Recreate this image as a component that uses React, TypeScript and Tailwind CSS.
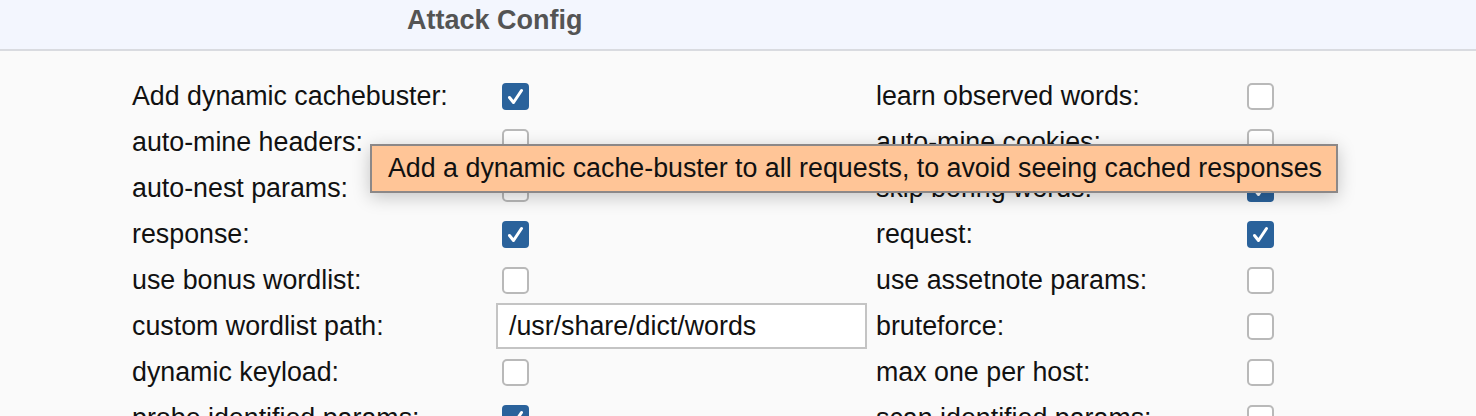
import React from 'react';

type Field = { label: string; checked?: boolean; text?: string };

const ROWS: [Field, Field][] = [
  [{ label: 'Add dynamic cachebuster:', checked: true }, { label: 'learn observed words:', checked: false }],
  [{ label: 'auto-mine headers:', checked: false }, { label: 'auto-mine cookies:', checked: false }],
  [{ label: 'auto-nest params:', checked: false }, { label: 'skip boring words:', checked: true }],
  [{ label: 'response:', checked: true }, { label: 'request:', checked: true }],
  [{ label: 'use bonus wordlist:', checked: false }, { label: 'use assetnote params:', checked: false }],
  [{ label: 'custom wordlist path:', text: '/usr/share/dict/words' }, { label: 'bruteforce:', checked: false }],
  [{ label: 'dynamic keyload:', checked: false }, { label: 'max one per host:', checked: false }],
  [{ label: 'probe identified params:', checked: true }, { label: 'scan identified params:', checked: false }],
];

function Checkbox({ checked }: { checked?: boolean }) {
  if (checked) {
    return (
      <div className="w-[27px] h-[27px] rounded-[4px] bg-[#2a629b] flex items-center justify-center">
        <svg width="27" height="27" viewBox="0 0 27 27">
          <path d="M7.5 14.5 L11.5 19.5 L19.5 7.5" fill="none" stroke="white" strokeWidth="3" strokeLinecap="round" strokeLinejoin="round" />
        </svg>
      </div>
    );
  }
  return <div className="w-[27px] h-[27px] rounded-[5px] bg-white border-2 border-[#b9b9b9]" />;
}

function Control({ field, offset }: { field: Field; offset: string }) {
  if (field.text !== undefined) {
    return (
      <div className="w-[371px] h-[46px] border-2 border-[#c4c4c4] bg-white flex items-center pl-[11px]">
        {field.text}
      </div>
    );
  }
  return (
    <div className={offset}>
      <Checkbox checked={field.checked} />
    </div>
  );
}

export default function App() {
  return (
    <div
      className="relative h-[416px] w-[1476px] overflow-hidden bg-[#fafafa] text-[#111] text-[26.8px]"
      style={{ fontFamily: '"Liberation Sans", Arial, sans-serif' }}
    >
      {/* Header */}
      <div className="h-[51px] bg-[#f3f6fe] border-b-2 border-[#d9dbe0] flex items-center pl-[407px]">
        <span className="font-bold text-[#545454] text-[27px] mt-[-8px]">Attack Config</span>
      </div>

      {/* Options grid */}
      <div className="pt-[22px] pl-[132px]">
        {ROWS.map(([left, right], i) => (
          <div key={i} className="grid grid-cols-[364px_380px_370px_auto] h-[46px] items-center">
            <span className="leading-none">{left.label}</span>
            <Control field={left} offset="ml-[6px]" />
            <span className="leading-none">{right.label}</span>
            <Control field={right} offset="ml-[1px]" />
          </div>
        ))}
      </div>

      {/* Tooltip */}
      <div className="absolute left-[370px] top-[144px] w-[968px] h-[49px] bg-[#ffc597] border-2 border-[#8c8888] shadow-[0_4px_18px_rgba(0,0,0,0.22)] flex items-center pl-[16px] leading-none">
        Add a dynamic cache-buster to all requests, to avoid seeing cached responses
      </div>
    </div>
  );
}
